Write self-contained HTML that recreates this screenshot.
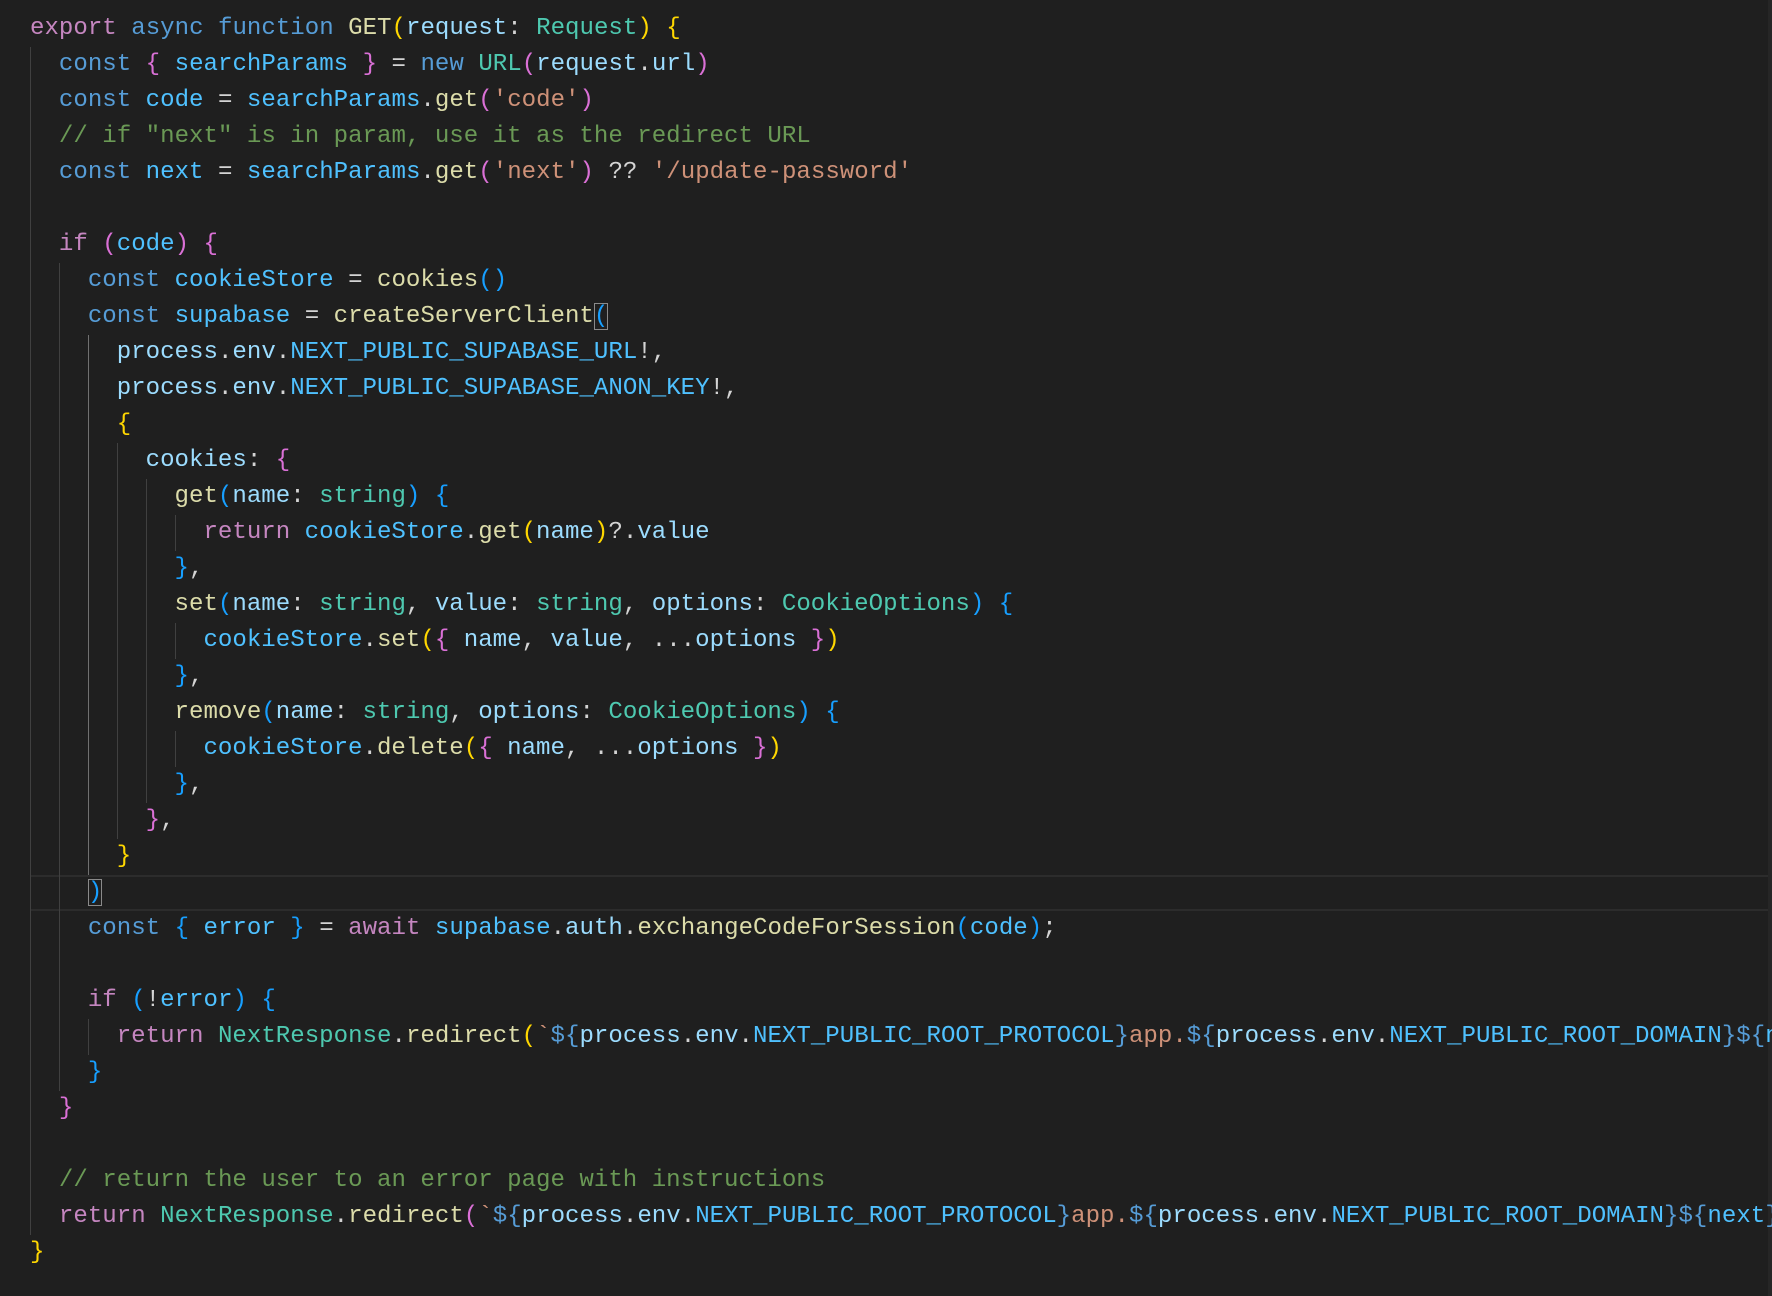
<!DOCTYPE html>
<html><head><meta charset="utf-8"><style>
html,body{margin:0;padding:0;background:#1f1f1f;width:1772px;height:1296px;overflow:hidden}
#code{position:absolute;left:30px;top:11px;width:1742px;overflow:hidden;font-family:"Liberation Mono",monospace;font-size:24.1px;line-height:36px;color:#d4d4d4}
.l{height:36px;position:relative;white-space:pre}
.i{display:inline-block;width:2ch;height:36px;vertical-align:top;border-left:1px solid #404040;box-sizing:border-box}
.i.a{border-left-color:#707070}
.k{color:#c586c0}.b{color:#569cd6}.f{color:#dcdcaa}.v{color:#9cdcfe}.c{color:#4fc1ff}.t{color:#4ec9b0}.s{color:#ce9178}.m{color:#6a9955}
.g1{color:#ffd700}.g2{color:#da70d6}.g3{color:#179fff}
.bx{outline:1px solid #8a8a8a;outline-offset:-1px}
#hl{position:absolute;left:31px;right:0;top:875px;height:32px;border-top:2px solid #2c2c2c;border-bottom:2px solid #2c2c2c}
#sb{position:absolute;right:0;top:0;width:4px;height:1296px;background:#262626}
</style></head><body>
<div id="hl"></div>
<div id="sb"></div>
<div id="code"><div class="l"><span class="k">export</span> <span class="b">async</span> <span class="b">function</span> <span class="f">GET</span><span class="g1">(</span><span class="v">request</span>: <span class="t">Request</span><span class="g1">)</span> <span class="g1">{</span></div><div class="l"><span class="i"></span><span class="b">const</span> <span class="g2">{</span> <span class="c">searchParams</span> <span class="g2">}</span> = <span class="b">new</span> <span class="t">URL</span><span class="g2">(</span><span class="v">request</span>.<span class="v">url</span><span class="g2">)</span></div><div class="l"><span class="i"></span><span class="b">const</span> <span class="c">code</span> = <span class="c">searchParams</span>.<span class="f">get</span><span class="g2">(</span><span class="s">'code'</span><span class="g2">)</span></div><div class="l"><span class="i"></span><span class="m">// if "next" is in param, use it as the redirect URL</span></div><div class="l"><span class="i"></span><span class="b">const</span> <span class="c">next</span> = <span class="c">searchParams</span>.<span class="f">get</span><span class="g2">(</span><span class="s">'next'</span><span class="g2">)</span> ?? <span class="s">'/update-password'</span></div><div class="l"><span class="i"></span></div><div class="l"><span class="i"></span><span class="k">if</span> <span class="g2">(</span><span class="c">code</span><span class="g2">)</span> <span class="g2">{</span></div><div class="l"><span class="i"></span><span class="i"></span><span class="b">const</span> <span class="c">cookieStore</span> = <span class="f">cookies</span><span class="g3">()</span></div><div class="l"><span class="i"></span><span class="i"></span><span class="b">const</span> <span class="c">supabase</span> = <span class="f">createServerClient</span><span class="g3 bx">(</span></div><div class="l"><span class="i"></span><span class="i"></span><span class="i a"></span><span class="v">process</span>.<span class="v">env</span>.<span class="c">NEXT_PUBLIC_SUPABASE_URL</span>!,</div><div class="l"><span class="i"></span><span class="i"></span><span class="i a"></span><span class="v">process</span>.<span class="v">env</span>.<span class="c">NEXT_PUBLIC_SUPABASE_ANON_KEY</span>!,</div><div class="l"><span class="i"></span><span class="i"></span><span class="i a"></span><span class="g1">{</span></div><div class="l"><span class="i"></span><span class="i"></span><span class="i a"></span><span class="i"></span><span class="v">cookies</span>: <span class="g2">{</span></div><div class="l"><span class="i"></span><span class="i"></span><span class="i a"></span><span class="i"></span><span class="i"></span><span class="f">get</span><span class="g3">(</span><span class="v">name</span>: <span class="t">string</span><span class="g3">)</span> <span class="g3">{</span></div><div class="l"><span class="i"></span><span class="i"></span><span class="i a"></span><span class="i"></span><span class="i"></span><span class="i"></span><span class="k">return</span> <span class="c">cookieStore</span>.<span class="f">get</span><span class="g1">(</span><span class="v">name</span><span class="g1">)</span>?.<span class="v">value</span></div><div class="l"><span class="i"></span><span class="i"></span><span class="i a"></span><span class="i"></span><span class="i"></span><span class="g3">}</span>,</div><div class="l"><span class="i"></span><span class="i"></span><span class="i a"></span><span class="i"></span><span class="i"></span><span class="f">set</span><span class="g3">(</span><span class="v">name</span>: <span class="t">string</span>, <span class="v">value</span>: <span class="t">string</span>, <span class="v">options</span>: <span class="t">CookieOptions</span><span class="g3">)</span> <span class="g3">{</span></div><div class="l"><span class="i"></span><span class="i"></span><span class="i a"></span><span class="i"></span><span class="i"></span><span class="i"></span><span class="c">cookieStore</span>.<span class="f">set</span><span class="g1">(</span><span class="g2">{</span> <span class="v">name</span>, <span class="v">value</span>, ...<span class="v">options</span> <span class="g2">}</span><span class="g1">)</span></div><div class="l"><span class="i"></span><span class="i"></span><span class="i a"></span><span class="i"></span><span class="i"></span><span class="g3">}</span>,</div><div class="l"><span class="i"></span><span class="i"></span><span class="i a"></span><span class="i"></span><span class="i"></span><span class="f">remove</span><span class="g3">(</span><span class="v">name</span>: <span class="t">string</span>, <span class="v">options</span>: <span class="t">CookieOptions</span><span class="g3">)</span> <span class="g3">{</span></div><div class="l"><span class="i"></span><span class="i"></span><span class="i a"></span><span class="i"></span><span class="i"></span><span class="i"></span><span class="c">cookieStore</span>.<span class="f">delete</span><span class="g1">(</span><span class="g2">{</span> <span class="v">name</span>, ...<span class="v">options</span> <span class="g2">}</span><span class="g1">)</span></div><div class="l"><span class="i"></span><span class="i"></span><span class="i a"></span><span class="i"></span><span class="i"></span><span class="g3">}</span>,</div><div class="l"><span class="i"></span><span class="i"></span><span class="i a"></span><span class="i"></span><span class="g2">}</span>,</div><div class="l"><span class="i"></span><span class="i"></span><span class="i a"></span><span class="g1">}</span></div><div class="l"><span class="i"></span><span class="i"></span><span class="g3 bx">)</span></div><div class="l"><span class="i"></span><span class="i"></span><span class="b">const</span> <span class="g3">{</span> <span class="c">error</span> <span class="g3">}</span> = <span class="k">await</span> <span class="c">supabase</span>.<span class="v">auth</span>.<span class="f">exchangeCodeForSession</span><span class="g3">(</span><span class="c">code</span><span class="g3">)</span>;</div><div class="l"><span class="i"></span><span class="i"></span></div><div class="l"><span class="i"></span><span class="i"></span><span class="k">if</span> <span class="g3">(</span>!<span class="c">error</span><span class="g3">)</span> <span class="g3">{</span></div><div class="l"><span class="i"></span><span class="i"></span><span class="i"></span><span class="k">return</span> <span class="t">NextResponse</span>.<span class="f">redirect</span><span class="g1">(</span><span class="s">`</span><span class="b">${</span><span class="v">process</span>.<span class="v">env</span>.<span class="c">NEXT_PUBLIC_ROOT_PROTOCOL</span><span class="b">}</span><span class="s">app.</span><span class="b">${</span><span class="v">process</span>.<span class="v">env</span>.<span class="c">NEXT_PUBLIC_ROOT_DOMAIN</span><span class="b">}${</span><span class="c">next</span><span class="b">}</span><span class="s">`</span><span class="g1">)</span></div><div class="l"><span class="i"></span><span class="i"></span><span class="g3">}</span></div><div class="l"><span class="i"></span><span class="g2">}</span></div><div class="l"><span class="i"></span></div><div class="l"><span class="i"></span><span class="m">// return the user to an error page with instructions</span></div><div class="l"><span class="i"></span><span class="k">return</span> <span class="t">NextResponse</span>.<span class="f">redirect</span><span class="g2">(</span><span class="s">`</span><span class="b">${</span><span class="v">process</span>.<span class="v">env</span>.<span class="c">NEXT_PUBLIC_ROOT_PROTOCOL</span><span class="b">}</span><span class="s">app.</span><span class="b">${</span><span class="v">process</span>.<span class="v">env</span>.<span class="c">NEXT_PUBLIC_ROOT_DOMAIN</span><span class="b">}${</span><span class="c">next</span><span class="b">}</span><span class="s">`</span><span class="g2">)</span></div><div class="l"><span class="g1">}</span></div></div>
</body></html>
